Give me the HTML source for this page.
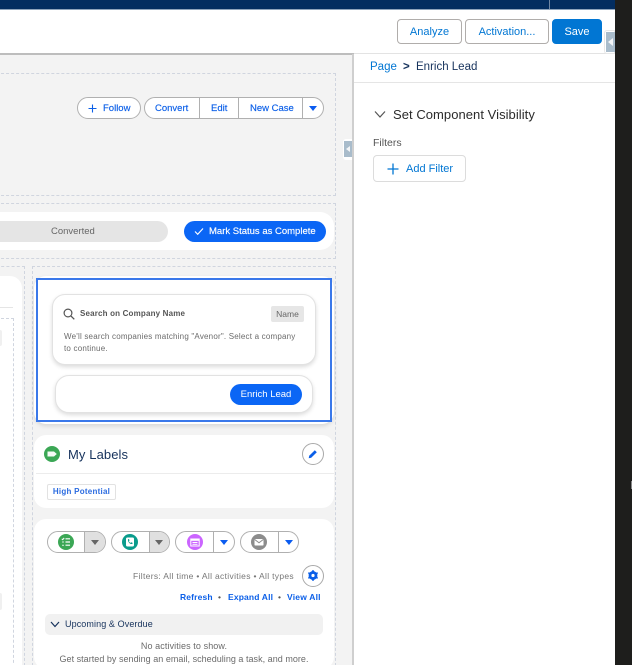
<!DOCTYPE html>
<html><head><meta charset="utf-8">
<style>
*{box-sizing:border-box}
html,body{margin:0;padding:0;width:632px;height:665px;overflow:hidden;background:#fff}
#w{position:absolute;left:0;top:0;width:632px;height:665px;overflow:hidden;background:#fff;font-family:"Liberation Sans",sans-serif;color:#444;filter:blur(.3px)}
.a{position:absolute}
.t{position:absolute;white-space:nowrap;line-height:1}
.m{font-weight:normal;-webkit-text-stroke:.15px currentColor}
.btn{position:absolute;border:1px solid #b0adab;border-radius:4px;background:#fff;color:#0176d3;font-size:11px;text-align:center;line-height:25px}
.dash{position:absolute;border:1px dashed #d0d5df}
.pill{position:absolute;height:22px;border:1px solid #b0b0b0;border-radius:11px;background:#fff;overflow:hidden}
.dd{position:absolute;top:0;bottom:0;border-left:1px solid #b0b0b0}
.tri{position:absolute;width:0;height:0;border-left:4px solid transparent;border-right:4px solid transparent;border-top:5px solid #0b5cf0}
.blue{color:#0b5fe8}
.ctr{text-align:center}
</style></head><body><div id="w">
<div class="a" style="left:0;top:0;width:615px;height:9px;background:#032d60"></div>
<div class="a" style="left:549px;top:0;width:1px;height:9px;background:#6f86a3"></div>
<div class="a" style="left:0;top:9px;width:615px;height:1px;background:#8ea3bb"></div>

<div class="btn" style="left:397px;top:19px;width:65px;height:25px">Analyze</div>
<div class="btn" style="left:465px;top:19px;width:84px;height:25px">Activation...</div>
<div class="btn" style="left:552px;top:19px;width:50px;height:25px;background:#0176d3;border-color:#0176d3;color:#fff">Save</div>

<div class="a" style="left:0;top:53px;width:615px;height:1px;background:#e3e3e3"></div>
<div class="a" style="left:0;top:54px;width:354px;height:611px;background:#f3f3f3"></div>
<div class="a" style="left:0;top:53px;width:354px;height:2px;background:#bdbdbd"></div>
<div class="a" style="left:352px;top:54px;width:2px;height:611px;background:#cfcfcf"></div>

<div class="a" style="left:604px;top:30px;width:11px;height:24px;background:#fff;border:1px solid #e8e8e8;border-radius:3px 0 0 3px"></div>
<div class="a" style="left:606px;top:32px;width:9px;height:20px;background:#a9bccb"></div>
<div class="a" style="left:608px;top:38px;width:0;height:0;border-top:4px solid transparent;border-bottom:4px solid transparent;border-right:5px solid #f3f5f7"></div>

<div class="t" style="left:370px;top:62px;font-size:11.5px;color:#0176d3">Page</div>
<div class="t" style="left:403px;top:62px;font-size:11.5px;color:#16325c;font-weight:bold">&gt;</div>
<div class="t" style="left:416px;top:62px;font-size:11.5px;color:#16325c">Enrich Lead</div>
<div class="a" style="left:354px;top:82px;width:261px;height:1px;background:#e5e5e5"></div>

<svg class="a" style="left:374px;top:110px" width="12" height="9" viewBox="0 0 12 9"><path d="M1 1.5L6 7L11 1.5" fill="none" stroke="#555" stroke-width="1.2"/></svg>
<div class="t" style="left:393px;top:108px;font-size:13px;color:#2b2b2b;letter-spacing:.05px">Set Component Visibility</div>
<div class="t" style="left:373px;top:138px;font-size:10.5px;color:#555">Filters</div>
<div class="a" style="left:373px;top:155px;width:93px;height:27px;border:1px solid #dcdcdc;border-radius:4px;background:#fff"></div>
<svg class="a" style="left:387px;top:163px" width="12" height="12" viewBox="0 0 12 12"><path d="M6 .5V11.5M.5 6H11.5" stroke="#0176d3" stroke-width="1.3" fill="none"/></svg>
<div class="t" style="left:406px;top:164px;font-size:11px;color:#0176d3">Add Filter</div>

<div class="a" style="left:343px;top:139px;width:9px;height:21px;background:#fff;border-radius:3px 0 0 3px"></div>
<div class="a" style="left:344px;top:141px;width:8px;height:16px;background:#a9bccb"></div>
<div class="a" style="left:346px;top:146px;width:0;height:0;border-top:3px solid transparent;border-bottom:3px solid transparent;border-right:4px solid #f3f5f7"></div>

<!-- header region -->
<div class="dash" style="left:-4px;top:73px;width:340px;height:123px"></div>
<div class="pill" style="left:77px;top:97px;width:64px"></div>
<svg class="a" style="left:88px;top:104px" width="9" height="9" viewBox="0 0 9 9"><path d="M4.5 .5V8.5M.5 4.5H8.5" stroke="#0b5fe8" stroke-width="1.1" fill="none"/></svg>
<div class="t blue m" style="left:103px;top:104px;font-size:9.5px">Follow</div>
<div class="pill" style="left:144px;top:97px;width:180px">
<div class="dd" style="left:54px"></div><div class="dd" style="left:93px"></div><div class="dd" style="left:157px"></div>
<div class="tri" style="left:164px;top:8px;border-left-width:4.5px;border-right-width:4.5px"></div>
</div>
<div class="t blue m" style="left:155px;top:104px;font-size:9.5px">Convert</div>
<div class="t blue m" style="left:211px;top:104px;font-size:9.5px">Edit</div>
<div class="t blue m" style="left:250px;top:104px;font-size:9.5px">New Case</div>

<!-- path region -->
<div class="dash" style="left:-4px;top:203px;width:340px;height:56px"></div>
<div class="a" style="left:0;top:212px;width:334px;height:38px;background:#fff;border-radius:0 14px 14px 0"></div>
<div class="a" style="left:-20px;top:221px;width:188px;height:21px;background:#e5e5e5;border-radius:11px"></div>
<div class="t" style="left:51px;top:227px;font-size:9.5px;color:#666">Converted</div>
<div class="a" style="left:184px;top:221px;width:142px;height:21px;background:#0b66f5;border-radius:11px"></div>
<svg class="a" style="left:194px;top:227px" width="10" height="9" viewBox="0 0 10 9"><path d="M1 4.5L3.7 7.3L9 1.5" stroke="#fff" stroke-width="1.1" fill="none"/></svg>
<div class="t m" style="left:209px;top:227px;font-size:9.5px;color:#fff">Mark Status as Complete</div>

<!-- left column -->
<div class="dash" style="left:-4px;top:266px;width:29px;height:410px"></div>
<div class="a" style="left:0;top:276px;width:22px;height:400px;background:#fff;border-radius:0 12px 0 0"></div>
<div class="a" style="left:0;top:307px;width:13px;height:1px;background:#e5e5e5"></div>
<div class="dash" style="left:-4px;top:318px;width:18px;height:360px;background:#fff"></div>
<div class="a" style="left:0;top:330px;width:2px;height:16px;background:#f0f0f0;border-radius:0 3px 3px 0"></div>
<div class="a" style="left:0;top:593px;width:2px;height:17px;background:#f0f0f0;border-radius:0 3px 3px 0"></div>

<!-- right column -->
<div class="dash" style="left:32px;top:266px;width:304px;height:410px"></div>

<div class="a" style="left:34px;top:276px;width:300px;height:148px;background:#fff;border-radius:12px;box-shadow:0 2px 5px rgba(0,0,0,.12)"></div>
<div class="a" style="left:36px;top:278px;width:296px;height:144px;border:2px solid #3a78ea;background:#fff"></div>
<div class="a" style="left:52px;top:294px;width:264px;height:71px;background:#fff;border:1px solid #e2e2e2;border-radius:13px;box-shadow:0 2px 4px rgba(0,0,0,.14)"></div>
<svg class="a" style="left:63px;top:308px" width="12" height="12" viewBox="0 0 12 12"><circle cx="5" cy="5" r="3.9" fill="none" stroke="#555" stroke-width="1.2"/><path d="M7.9 7.9L11.3 11.3" stroke="#555" stroke-width="1.3"/></svg>
<div class="t" style="left:80px;top:310px;font-size:8px;font-weight:bold;color:#555;letter-spacing:.17px">Search on Company Name</div>
<div class="a" style="left:271px;top:306px;width:33px;height:16px;background:#e6e6e6;border-radius:2px;font-size:8.5px;text-align:center;line-height:16px;color:#666">Name</div>
<div class="t" style="left:64px;top:332.5px;font-size:8px;color:#6b6b6b;letter-spacing:.2px">We'll search companies matching "Avenor". Select a company</div>
<div class="t" style="left:64px;top:344.5px;font-size:8px;color:#6b6b6b;letter-spacing:.2px">to continue.</div>
<div class="a" style="left:55px;top:375px;width:258px;height:38px;background:#fff;border:1px solid #e2e2e2;border-radius:14px;box-shadow:0 2px 4px rgba(0,0,0,.14)"></div>
<div class="a" style="left:230px;top:384px;width:72px;height:21px;background:#0b66f5;border-radius:11px;color:#fff;font-size:9.5px;text-align:center;line-height:21px">Enrich Lead</div>

<!-- labels -->
<div class="a" style="left:34px;top:435px;width:300px;height:73px;background:#fff;border-radius:12px"></div>
<svg class="a" style="left:44px;top:446px" width="16" height="16" viewBox="0 0 16 16"><circle cx="8" cy="8" r="8" fill="#3ba755"/><path d="M3.5 5.5H10L12.8 8L10 10.5H3.5Z" fill="#fff" opacity=".95"/></svg>
<div class="t" style="left:68px;top:447.5px;font-size:13px;color:#16325c;letter-spacing:.1px">My Labels</div>
<div class="a" style="left:302px;top:443px;width:22px;height:22px;border:1px solid #a9a9a9;border-radius:50%;background:#fff"></div>
<svg class="a" style="left:308px;top:449px" width="10" height="10" viewBox="0 0 10 10"><path d="M.7 9.3L1.2 6.8L6.8 1.2L8.8 3.2L3.2 8.8Z" fill="#0b5fe8"/></svg>
<div class="a" style="left:36px;top:473px;width:298px;height:1px;background:#ececec"></div>
<div class="a" style="left:47px;top:484px;width:69px;height:16px;border:1px solid #e2e2e2;border-radius:2px;background:#fff;font-size:8px;font-weight:bold;color:#2a6be0;text-align:center;line-height:14px;letter-spacing:.25px">High Potential</div>

<!-- activity -->
<div class="a" style="left:34px;top:519px;width:300px;height:150px;background:#fff;border-radius:12px"></div>

<div class="pill" style="left:47px;top:531px;width:59px"><div class="dd" style="left:36px;right:0;background:#e0e0e0"></div><div class="tri" style="left:43px;top:8px;border-top-color:#666"></div></div>
<svg class="a" style="left:58px;top:534px" width="16" height="16" viewBox="0 0 16 16"><circle cx="8" cy="8" r="8" fill="#3ba755"/><path d="M7.5 4.8H12M7.5 8H12M7.5 11.2H12" stroke="#fff" stroke-width="1.2"/><path d="M3.8 4.8L4.7 5.7L6.2 4M4.2 8H5.8M4.2 11.2H5.8" stroke="#fff" stroke-width="1" fill="none"/></svg>

<div class="pill" style="left:111px;top:531px;width:59px"><div class="dd" style="left:37px;right:0;background:#e0e0e0"></div><div class="tri" style="left:43px;top:8px;border-top-color:#666"></div></div>
<svg class="a" style="left:122px;top:534px" width="16" height="16" viewBox="0 0 16 16"><circle cx="8" cy="8" r="8" fill="#0b9c8c"/><rect x="4" y="3.5" width="8" height="9" rx="1.5" fill="#fff"/><path d="M6 5.2L7 5L7.5 6.5L6.9 7.1C7.2 7.9 7.9 8.6 8.7 8.9L9.3 8.3L10.6 8.9L10.4 10C8 10.4 5.6 8 6 5.2Z" fill="#0b9c8c"/></svg>

<div class="pill" style="left:175px;top:531px;width:60px"><div class="dd" style="left:37px"></div><div class="tri" style="left:44px;top:8px"></div></div>
<svg class="a" style="left:187px;top:534px" width="16" height="16" viewBox="0 0 16 16"><circle cx="8" cy="8" r="8" fill="#cb65ff"/><path d="M3.8 5H12.2V12H3.8Z" fill="none" stroke="#fff" stroke-width="1"/><path d="M3.8 4.5H12.2V6.8H3.8Z" fill="#fff"/><path d="M5.5 8.5H10.5M5.5 10.3H10.5" stroke="#fff" stroke-width=".9"/></svg>

<div class="pill" style="left:240px;top:531px;width:59px"><div class="dd" style="left:37px"></div><div class="tri" style="left:44px;top:8px"></div></div>
<svg class="a" style="left:251px;top:534px" width="16" height="16" viewBox="0 0 16 16"><circle cx="8" cy="8" r="8" fill="#8c8c8c"/><rect x="3.5" y="5" width="9" height="6.5" rx=".8" fill="#fff"/><path d="M3.7 5.5L8 8.8L12.3 5.5" fill="none" stroke="#8c8c8c" stroke-width="1"/></svg>

<div class="t" style="right:338px;top:572px;font-size:8.5px;color:#777;letter-spacing:.32px">Filters: All time &#8226; All activities &#8226; All types</div>
<div class="a" style="left:302px;top:565px;width:22px;height:22px;border:1px solid #a9a9a9;border-radius:50%;background:#fff"></div>
<svg class="a" style="left:308px;top:570px" width="10" height="11" viewBox="0 0 10 11"><path d="M5 .5L9.3 3V8L5 10.5L.7 8V3Z" fill="#0b5fe8"/><path d="M5 0V11M.2 2.8L9.8 8.2M9.8 2.8L.2 8.2" stroke="#0b5fe8" stroke-width="1.3"/><circle cx="5" cy="5.5" r="1.6" fill="#fff"/></svg>

<div class="t blue" style="left:180px;top:593px;font-size:8.5px;font-weight:bold;letter-spacing:.15px">Refresh</div>
<div class="t" style="left:218px;top:593px;font-size:8.5px;color:#555">&#8226;</div>
<div class="t blue" style="left:228px;top:593px;font-size:8.5px;font-weight:bold;letter-spacing:.15px">Expand All</div>
<div class="t" style="left:278px;top:593px;font-size:8.5px;color:#555">&#8226;</div>
<div class="t blue" style="left:287px;top:593px;font-size:8.5px;font-weight:bold;letter-spacing:.2px">View All</div>

<div class="a" style="left:45px;top:614px;width:278px;height:21px;background:#f1f1f1;border-radius:5px"></div>
<svg class="a" style="left:50px;top:621px" width="10" height="7" viewBox="0 0 10 7"><path d="M1 1L5 5.5L9 1" fill="none" stroke="#16325c" stroke-width="1.2"/></svg>
<div class="t" style="left:65px;top:620px;font-size:9px;color:#16325c;letter-spacing:.1px">Upcoming &amp; Overdue</div>
<div class="t ctr" style="left:34px;width:300px;top:642px;font-size:9px;color:#6b6b6b;letter-spacing:.1px">No activities to show.</div>
<div class="t ctr" style="left:34px;width:300px;top:655px;font-size:9px;color:#6b6b6b;letter-spacing:.03px">Get started by sending an email, scheduling a task, and more.</div>

<!-- right dark strip -->
<div class="a" style="left:615px;top:0;width:17px;height:665px;background:#1e1e1c"></div>
<div class="a" style="left:631px;top:481px;width:1px;height:8px;background:#888"></div>
</div></body></html>
